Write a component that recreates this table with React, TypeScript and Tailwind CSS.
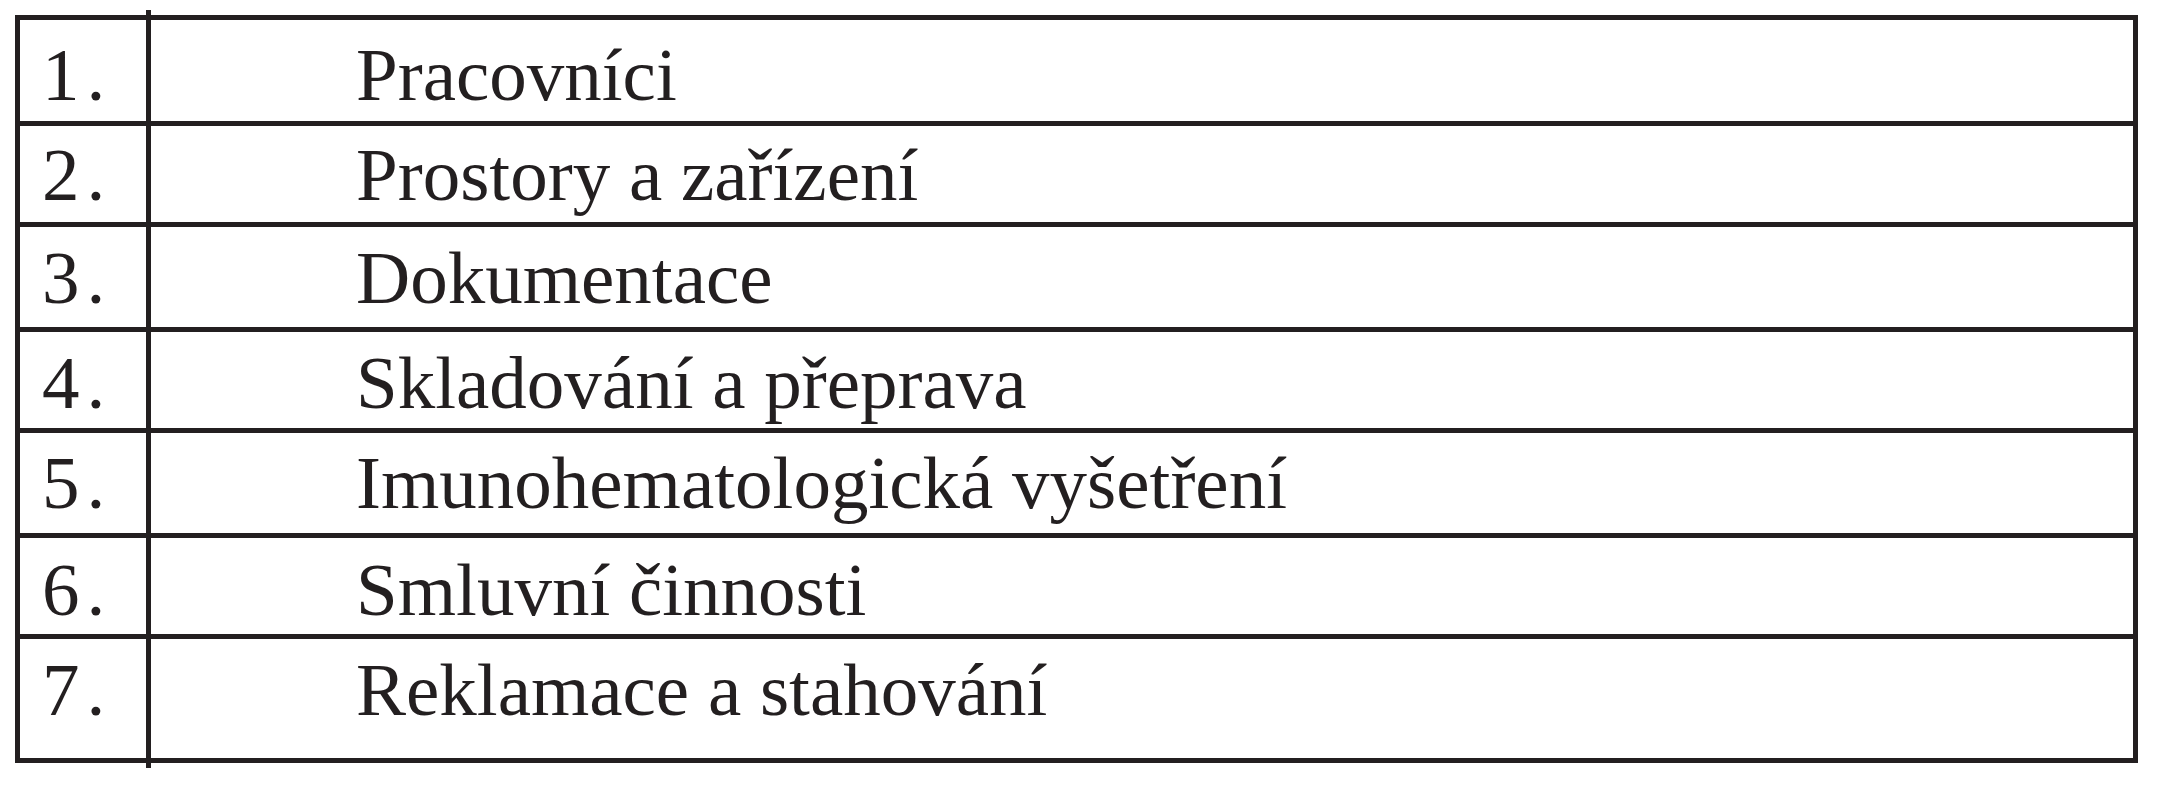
const rows = [
  { num: "1.", label: "Pracovníci", h: "h-[106px]", pt: "pt-[17px]" },
  { num: "2.", label: "Prostory a zařízení", h: "h-[101px]", pt: "pt-[11px]" },
  { num: "3.", label: "Dokumentace", h: "h-[105px]", pt: "pt-[13px]" },
  { num: "4.", label: "Skladování a přeprava", h: "h-[101px]", pt: "pt-[13px]" },
  { num: "5.", label: "Imunohematologická vyšetření", h: "h-[105px]", pt: "pt-[12px]" },
  { num: "6.", label: "Smluvní činnosti", h: "h-[101px]", pt: "pt-[14px]" },
  { num: "7.", label: "Reklamace a stahování", h: "h-[124px]", pt: "pt-[13px]" }
];

const font = "font-['Liberation_Serif','Times_New_Roman',serif] text-[75px] leading-none text-[#231f20]";

export default function App() {
  return (
    <div className="min-h-[800px] w-[2158px] bg-white pt-[10px] pl-[15px]">
      <div className="flex items-stretch">
        {/* number column */}
        <div className="mt-[5px] mb-[5px] w-[131px] border-l-[5px] border-t-[5px] border-[#231f20]">
          {rows.map((r) => (
            <div key={r.num} className={`${r.h} ${r.pt} ${font} whitespace-nowrap border-b-[5px] border-[#231f20] pl-[22px] tracking-[7px]`}>
              {r.num}
            </div>
          ))}
        </div>
        {/* divider sticks out above and below */}
        <div className="w-[5px] bg-[#231f20]" />
        {/* label column */}
        <div className="mt-[5px] mb-[5px] w-[1987px] border-r-[5px] border-t-[5px] border-[#231f20]">
          {rows.map((r) => (
            <div key={r.num} className={`${r.h} ${r.pt} ${font} whitespace-nowrap border-b-[5px] border-[#231f20] pl-[205px]`}>
              {r.label}
            </div>
          ))}
        </div>
      </div>
    </div>
  );
}
